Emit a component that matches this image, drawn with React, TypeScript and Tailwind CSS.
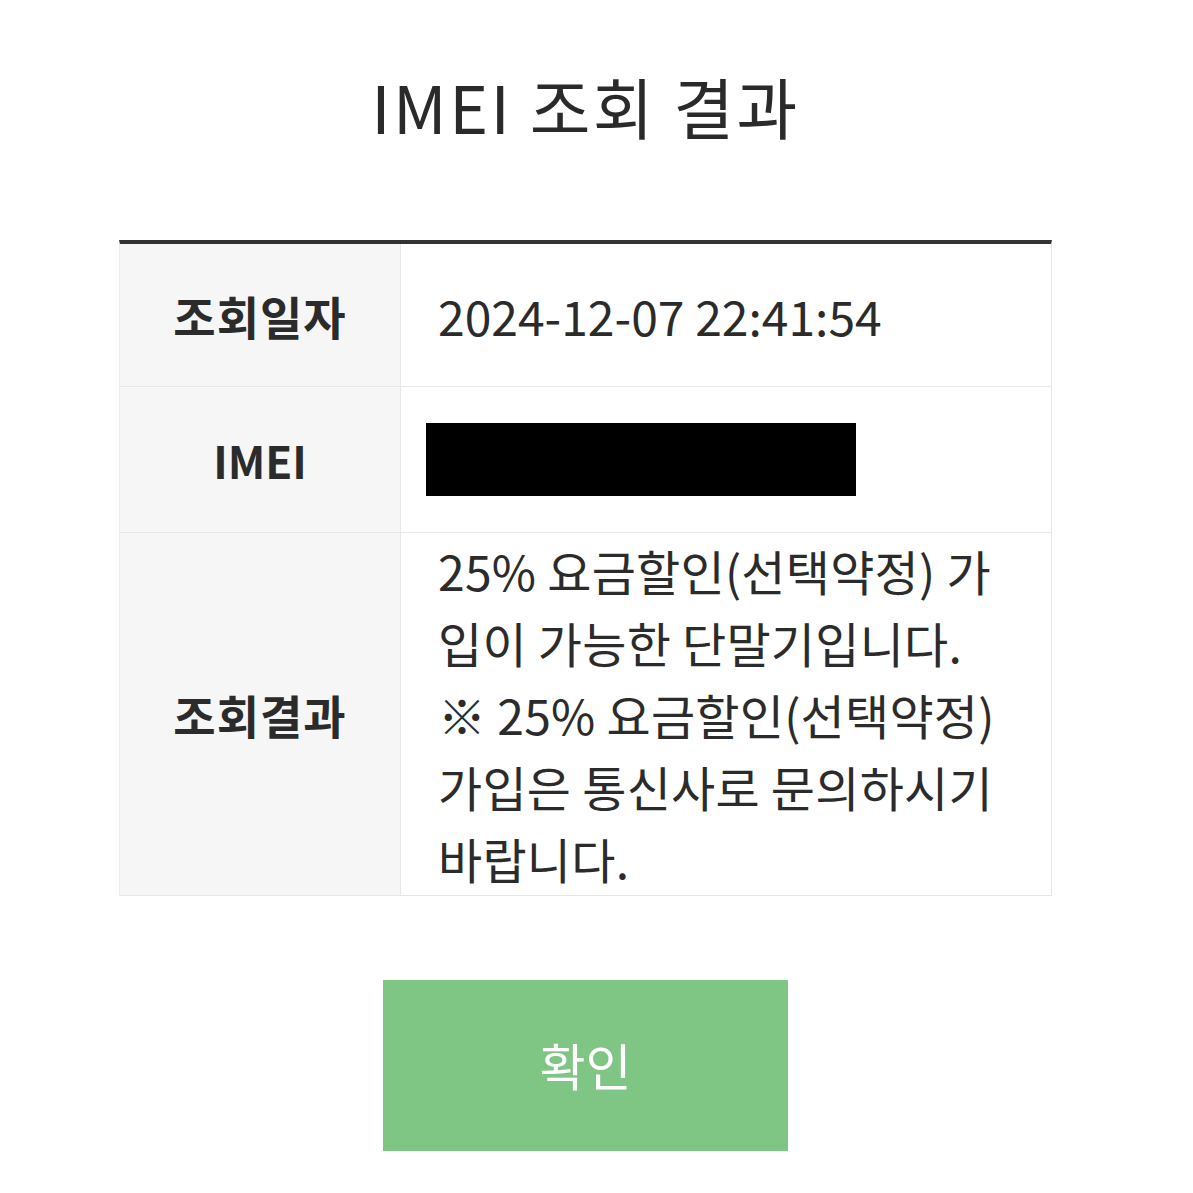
export default function App() {
  const font = { fontFamily: '"Noto Sans CJK KR", "Noto Sans", sans-serif' };
  return (
    <div className="min-h-[1193px] w-[1193px] bg-white text-[#2b2b2b]" style={font}>
      <div className="ml-[119px] w-[933px] flex flex-col items-center">
        <h1 className="pt-[59px] text-[66px] leading-[92px] tracking-[2.5px] font-normal text-[#2a2a2a]">IMEI 조회 결과</h1>
        <div className="mt-[89px] w-full border-t-4 border-[#333333] border-b border-r border-l border-l-[#ececec] border-b-[#e6e6e6] border-r-[#e6e6e6]">
          <div className="flex h-[143px] border-b border-[#e8e8e8]">
            <div className="w-[281px] shrink-0 bg-[#f6f6f6] border-r border-[#e8e8e8] flex items-center justify-center text-[46px] tracking-[1px] font-bold">조회일자</div>
            <div className="flex-1 flex items-center pl-[37px] text-[48px]">2024-12-07 22:41:54</div>
          </div>
          <div className="flex h-[146px] border-b border-[#e8e8e8]">
            <div className="w-[281px] shrink-0 bg-[#f6f6f6] border-r border-[#e8e8e8] flex items-center justify-center text-[44px] font-bold">IMEI</div>
            <div className="flex-1 flex items-center pl-[25px]">
              <div className="w-[430px] h-[73px] bg-black" />
            </div>
          </div>
          <div className="flex min-h-[362px]">
            <div className="w-[281px] shrink-0 bg-[#f6f6f6] border-r border-[#e8e8e8] flex items-center justify-center text-[46px] tracking-[1px] font-bold">조회결과</div>
            <div className="flex-1 flex items-center pl-[37px]">
              <p className="text-[48px] leading-[72px] tracking-[0.25px] whitespace-nowrap">
                25% 요금할인(선택약정) 가<br />
                입이 가능한 단말기입니다.<br />
                ※ 25% 요금할인(선택약정)<br />
                가입은 통신사로 문의하시기<br />
                바랍니다.
              </p>
            </div>
          </div>
        </div>
        <button className="mt-[84px] w-[405px] h-[171px] bg-[#7fc583] text-white text-[50px] leading-[60px] pb-[4px] flex items-center justify-center">확인</button>
      </div>
    </div>
  );
}
